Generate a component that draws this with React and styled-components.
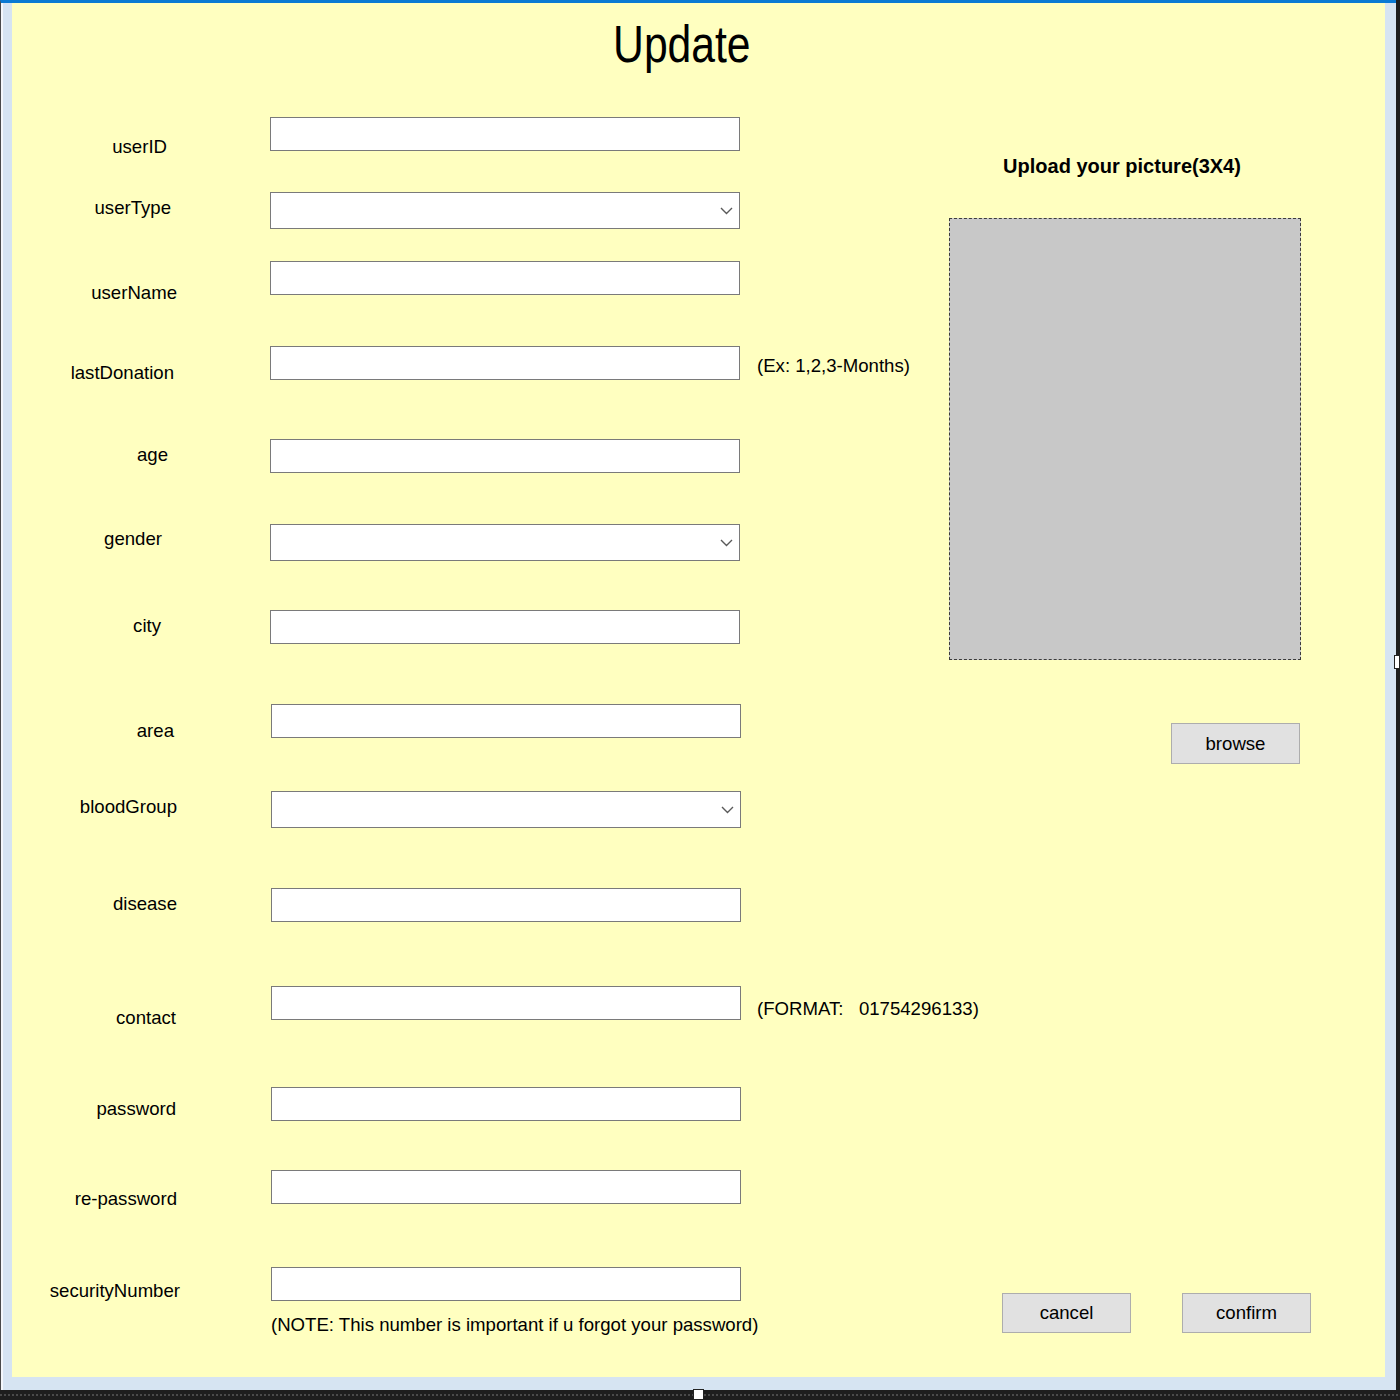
import styled, { createGlobalStyle } from "styled-components";

const GlobalStyle = createGlobalStyle`
  html, body {
    margin: 0;
    padding: 0;
    background: #1e1e1e;
  }
  * {
    box-sizing: border-box;
  }
`;

const fields = [
  { label: "userID", kind: "text", pitch: 75, dy: 29, shift: 13 },
  { label: "userType", kind: "select", pitch: 69, dy: 15, shift: 9 },
  { label: "userName", kind: "text", pitch: 85, dy: 31, shift: 3 },
  { label: "lastDonation", kind: "text", pitch: 93, dy: 26, shift: 6, hint: "(Ex: 1,2,3-Months)", hintDy: 19 },
  { label: "age", kind: "text", pitch: 85, dy: 15, shift: 12 },
  { label: "gender", kind: "select", pitch: 86, dy: 14, shift: 18 },
  { label: "city", kind: "text", pitch: 94, dy: 15, shift: 19 },
  { label: "area", kind: "text", pitch: 87, dy: 26, shift: 6, nudge: true },
  { label: "bloodGroup", kind: "select", pitch: 97, dy: 15, shift: 3, nudge: true },
  { label: "disease", kind: "text", pitch: 98, dy: 15, shift: 3, nudge: true },
  { label: "contact", kind: "text", pitch: 101, dy: 31, shift: 4, nudge: true, hint: "(FORMAT:   01754296133)", hintDy: 22 },
  { label: "password", kind: "text", pitch: 83, dy: 21, shift: 4, nudge: true },
  { label: "re-password", kind: "text", pitch: 97, dy: 28, shift: 3, nudge: true },
  {
    label: "securityNumber",
    kind: "text",
    dy: 23,
    shift: 0,
    nudge: true,
    note: "(NOTE: This number is important if u forgot your password)",
  },
];

function Chevron() {
  return (
    <svg width="13" height="8" viewBox="0 0 13 8" fill="none">
      <path d="M1 1l5.5 5.5L12 1" stroke="#5a5a5a" strokeWidth="1.4" />
    </svg>
  );
}

function Field({ f }) {
  return (
    <Row $pitch={f.pitch}>
      <Label $dy={f.dy} $shift={f.shift}>
        {f.label}
      </Label>
      <InputCell $nudge={f.nudge}>
        {f.kind === "select" ? (
          <Combo>
            <ComboBox />
            <ComboArrow>
              <Chevron />
            </ComboArrow>
          </Combo>
        ) : (
          <TextBox type="text" />
        )}
        {f.note && <Note>{f.note}</Note>}
      </InputCell>
      {f.hint && <Hint $dy={f.hintDy}>{f.hint}</Hint>}
    </Row>
  );
}

export default function App() {
  return (
    <>
      <GlobalStyle />
      <Screen>
        <Designer>
          <Form>
            <Header>
              <Title>Update</Title>
            </Header>
            <Main>
              <Fields>
                {fields.map((f) => (
                  <Field key={f.label} f={f} />
                ))}
              </Fields>
              <PictureSide>
                <UploadTitle>Upload your picture(3X4)</UploadTitle>
                <PictureBox />
                <BrowseButton>browse</BrowseButton>
                <Actions>
                  <Button>cancel</Button>
                  <Button>confirm</Button>
                </Actions>
              </PictureSide>
            </Main>
          </Form>
          <SideHandle />
        </Designer>
        <StatusStrip>
          <BottomHandle />
        </StatusStrip>
      </Screen>
    </>
  );
}

const Screen = styled.div`
  width: 1400px;
  height: 1400px;
  display: flex;
  flex-direction: column;
  background: #1e1e1e;
  font-family: "Liberation Sans", Arial, sans-serif;
  color: #000;
`;

const Designer = styled.div`
  position: relative;
  flex: 1;
  display: flex;
  margin-right: 4px;
  padding: 0 11px 13px 11px;
  background: #d6e4f2;
  border-top: 3px solid #0a7ad3;
  border-left: 1px solid #4a4a4a;
  box-shadow: inset 2px 0 0 #f4f7fb;
`;

const SideHandle = styled.div`
  position: absolute;
  right: -4px;
  top: 652px;
  width: 6px;
  height: 14px;
  background: #fff;
  border: 1px solid #222;
`;

const StatusStrip = styled.div`
  position: relative;
  height: 10px;
  background:
    repeating-linear-gradient(90deg, #4a4a4a 0 2px, #1e1e1e 2px 4px) 0 4px / 100% 2px no-repeat,
    #1e1e1e;
`;

const BottomHandle = styled.div`
  position: absolute;
  left: 693px;
  top: -1px;
  width: 11px;
  height: 11px;
  background: #fff;
  border: 1px solid #222;
`;

const Form = styled.div`
  flex: 1;
  display: flex;
  flex-direction: column;
  background: #ffffc0;
  overflow: hidden;
`;

const Header = styled.div`
  height: 114px;
  flex-shrink: 0;
  display: flex;
  justify-content: center;
  padding: 11px 34px 0 0;
`;

const Title = styled.h1`
  margin: 0;
  height: 60px;
  font-size: 52px;
  line-height: 60px;
  font-weight: normal;
  transform: scaleX(0.82);
`;

const Main = styled.div`
  flex: 1;
  display: flex;
`;

const Fields = styled.div`
  width: 937px;
  display: flex;
  flex-direction: column;
`;

const Row = styled.div`
  display: grid;
  grid-template-columns: 258px 470px 1fr;
  align-items: start;
  height: ${(p) => (p.$pitch ? `${p.$pitch}px` : "auto")};
`;

const Label = styled.div`
  margin-top: ${(p) => p.$dy - 10}px;
  padding-right: ${(p) => 90 + p.$shift}px;
  text-align: right;
  font-size: 18.6px;
  line-height: 22px;
  white-space: nowrap;
`;

const InputCell = styled.div`
  display: flex;
  flex-direction: column;
  margin-left: ${(p) => (p.$nudge ? "1px" : "0")};
`;

const TextBox = styled.input`
  width: 470px;
  height: 34px;
  margin: 0;
  border: 1px solid #7a7a7a;
  background: #fff;
  outline: none;
`;

const Combo = styled.div`
  position: relative;
  width: 470px;
  height: 37px;
`;

const ComboBox = styled.div`
  height: 100%;
  border: 1px solid #7a7a7a;
  background: #fff;
`;

const ComboArrow = styled.span`
  position: absolute;
  right: 7px;
  top: 15px;
  display: flex;
`;

const Note = styled.div`
  margin-top: 13px;
  font-size: 18.6px;
  line-height: 22px;
  white-space: nowrap;
`;

const Hint = styled.div`
  margin-top: ${(p) => p.$dy - 10}px;
  padding-left: 17px;
  font-size: 18.6px;
  line-height: 22px;
  white-space: pre;
`;

const PictureSide = styled.div`
  width: 362px;
  display: flex;
  flex-direction: column;
  padding-bottom: 44px;
`;

const UploadTitle = styled.div`
  margin-top: 37px;
  padding-right: 16px;
  text-align: center;
  font-size: 20px;
  line-height: 24px;
  font-weight: bold;
  white-space: nowrap;
`;

const PictureBox = styled.div`
  margin-top: 40px;
  width: 352px;
  height: 442px;
  background: #c8c8c8;
  border: 1px dashed #3c3c3c;
`;

const Button = styled.button`
  width: 130px;
  height: 40px;
  padding: 0;
  background: #e1e1e1;
  border: 1px solid #adadad;
  border-radius: 0;
  font-family: "Liberation Sans", Arial, sans-serif;
  font-size: 18.6px;
  color: #000;
`;

const BrowseButton = styled(Button)`
  align-self: flex-end;
  width: 129px;
  height: 41px;
  margin: 63px 11px 0 0;
`;

const Actions = styled.div`
  margin-top: auto;
  display: flex;
  gap: 51px;
  padding-left: 53px;
`;
